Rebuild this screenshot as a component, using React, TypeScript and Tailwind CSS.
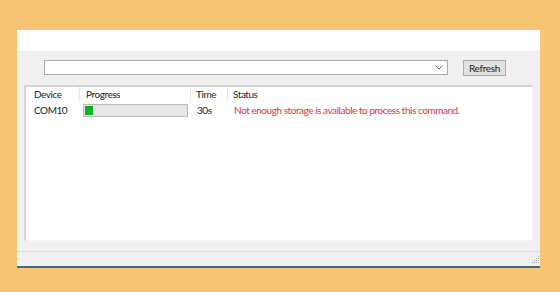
import React from 'react';

const font = { fontFamily: 'Lato, "Noto Sans", sans-serif' };

const Grip: React.FC = () => (
  <svg width="10" height="10" viewBox="0 0 10 10" className="absolute right-0 bottom-[2px]">
    {[
      [8, 2],
      [6, 4],
      [8, 4],
      [4, 6],
      [6, 6],
      [8, 6],
      [2, 8],
      [4, 8],
      [6, 8],
      [8, 8],
    ].map(([x, y], i) => (
      <rect key={i} x={x} y={y} width="1" height="1" fill="#a8a8a8" />
    ))}
  </svg>
);

export default function App() {
  return (
    <div className="w-[560px] h-[292px] bg-[#f7c574] pl-[17px] pt-[30px]" style={font}>
      <div className="w-[523px] h-[238px] bg-[#f0f0f0] flex flex-col text-[10px] tracking-[-0.45px] text-[#1e1e1e]">
        <div className="h-[21px] bg-white" />

        <div className="flex items-start mt-[9px]">
          <div className="ml-[27px] w-[404px] h-[15px] bg-white border border-[#a9a9a9] flex items-center justify-end pr-[4px]">
            <svg width="8" height="5" viewBox="0 0 8 5">
              <path d="M0.5 0.5 L4 4 L7.5 0.5" fill="none" stroke="#6d6d6d" strokeWidth="1" />
            </svg>
          </div>
          <button className="ml-[15px] w-[43px] h-[16px] bg-[#e1e1e1] border border-[#adadad] text-[10px] leading-none tracking-[-0.3px] text-[#1e1e1e]">
            Refresh
          </button>
        </div>

        <div className="ml-[7px] mt-[9px] w-[509px] h-[156px] bg-white border-l-2 border-t-2 border-[#d4d4d4] border-r border-b border-r-[#f6f6f6] border-b-[#f6f6f6]">
          <div className="flex h-[15px] items-center">
            <div className="w-[54px] pl-[8px] h-full flex items-center border-r border-[#e5e5e5]">Device</div>
            <div className="w-[111px] pl-[6px] h-full flex items-center border-r border-[#e5e5e5]">Progress</div>
            <div className="w-[37px] pl-[5px] h-full flex items-center border-r border-[#e5e5e5]">Time</div>
            <div className="pl-[5px] h-full flex items-center">Status</div>
          </div>
          <div className="flex h-[16px] items-center">
            <div className="w-[54px] pl-[8px]">COM10</div>
            <div className="w-[111px] pl-[3px] flex items-center">
              <div className="w-[105px] h-[13px] bg-[#e6e6e6] border border-[#bcbcbc] p-[1px]">
                <div className="w-[8px] h-full bg-[#06b025]" />
              </div>
            </div>
            <div className="w-[37px] pl-[6px]">30s</div>
            <div className="pl-[6px] text-[#dc323e]">Not enough storage is available to process this command.</div>
          </div>
        </div>

        <div className="mt-[10px] border-t border-[#dcdcdc] flex-1 relative">
          <Grip />
        </div>
        <div className="h-[2px] bg-[#3c6b8e]" />
      </div>
    </div>
  );
}
